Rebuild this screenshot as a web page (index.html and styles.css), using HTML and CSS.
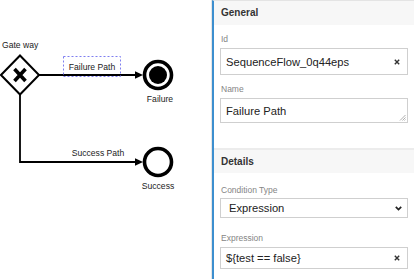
FILE: index.html
```html
<!DOCTYPE html>
<html>
<head>
<meta charset="utf-8">
<link rel="stylesheet" href="styles.css">
</head>
<body>
<div class="app">
  <div class="canvas">
    <svg class="diagram" width="212" height="279" viewBox="0 0 212 279">
      <text class="lbl" x="2" y="48">Gate way</text>
      <polygon points="20,55.5 39,75 20,94.5 1,75" fill="#fff" stroke="#000" stroke-width="2"/>
      <path d="M14.5 69 L25.5 81 M25.5 69 L14.5 81" stroke="#000" stroke-width="3.6" fill="none"/>
      <path d="M39 75 L137 75" stroke="#000" stroke-width="1.8" fill="none"/>
      <polygon points="143,75 135,71.3 135,78.7" fill="#000"/>
      <rect x="63.5" y="56.5" width="57" height="20" fill="none" stroke="#7e7ef0" stroke-width="1" stroke-dasharray="2,2"/>
      <text class="lbl" x="92" y="69.5" text-anchor="middle">Failure Path</text>
      <circle cx="158" cy="75" r="13.5" fill="#fff" stroke="#000" stroke-width="3.6"/>
      <circle cx="158" cy="75" r="9" fill="#000"/>
      <text class="lbl" x="160" y="101.5" text-anchor="middle">Failure</text>
      <path d="M20 94.5 L20 162 L137 162" stroke="#000" stroke-width="1.8" fill="none"/>
      <polygon points="143,162 135,158.3 135,165.7" fill="#000"/>
      <text class="lbl" x="98" y="155.5" text-anchor="middle">Success Path</text>
      <circle cx="158" cy="162" r="13.5" fill="#fff" stroke="#000" stroke-width="3.6"/>
      <text class="lbl" x="158" y="189" text-anchor="middle">Success</text>
    </svg>
  </div>
  <div class="panel">
    <div class="group">
      <div class="group-header">General</div>
      <div class="field">
        <div class="field-label">Id</div>
        <div class="control control-id">
          <span class="value">SequenceFlow_0q44eps</span>
          <svg class="clear" width="6" height="6" viewBox="0 0 6 6"><path d="M0.8 0.8 L5.2 5.2 M5.2 0.8 L0.8 5.2" stroke="#333" stroke-width="1.4"/></svg>
        </div>
      </div>
      <div class="field">
        <div class="field-label">Name</div>
        <div class="control control-area">
          <span class="value">Failure Path</span>
          <svg class="grip" width="7" height="7" viewBox="0 0 7 7"><path d="M6.5 1 L1 6.5 M6.5 3.5 L3.5 6.5 M6.5 5.5 L5.5 6.5" stroke="#999" stroke-width="0.8"/></svg>
        </div>
      </div>
    </div>
    <div class="group group-details">
      <div class="group-header">Details</div>
      <div class="field field-first">
        <div class="field-label">Condition Type</div>
        <div class="control control-select">
          <span class="value">Expression</span>
          <svg class="chevron" width="7" height="5" viewBox="0 0 7 5"><path d="M0.8 0.8 L3.5 3.6 L6.2 0.8" stroke="#222" stroke-width="1.7" fill="none"/></svg>
        </div>
      </div>
      <div class="field field-expr">
        <div class="field-label">Expression</div>
        <div class="control control-expr">
          <span class="value">${test == false}</span>
          <svg class="clear" width="6" height="6" viewBox="0 0 6 6"><path d="M0.8 0.8 L5.2 5.2 M5.2 0.8 L0.8 5.2" stroke="#333" stroke-width="1.4"/></svg>
        </div>
      </div>
    </div>
  </div>
</div>
</body>
</html>
```

FILE: styles.css
```css
html, body {
  margin: 0;
  padding: 0;
  background: #fff;
}

body {
  width: 414px;
  height: 279px;
  overflow: hidden;
  font-family: "Liberation Sans", Arial, sans-serif;
  color: #222;
}

.app {
  display: flex;
  height: 279px;
}

.canvas {
  width: 211px;
  flex: none;
  border-right: 1px solid #e6e6e6;
}

.diagram {
  display: block;
}

.lbl {
  font-family: "Liberation Sans", Arial, sans-serif;
  font-size: 8.6px;
  fill: #222;
}

.panel {
  flex: 1;
  border-left: 2px solid #3d8fcf;
  border-top: 1px solid #e4e4e4;
  background: #fff;
  height: 278px;
  overflow: hidden;
}

.group-header {
  height: 24px;
  line-height: 24px;
  background: #f7f7f7;
  padding-left: 7px;
  font-size: 10px;
  font-weight: bold;
  color: #333;
}

.field {
  padding: 0 6px;
}

.field-label {
  font-size: 8.5px;
  line-height: 10px;
  color: #858585;
  margin-top: 9px;
  margin-bottom: 4px;
  padding-left: 1px;
}

.control {
  display: flex;
  align-items: center;
  justify-content: space-between;
  border: 1px solid #cfcfcf;
  background: #fff;
  box-sizing: border-box;
  padding: 0 7px 0 5px;
  font-size: 11.2px;
  color: #222;
  position: relative;
}

.control-id {
  height: 27px;
}

.control-area {
  height: 25px;
}

.grip {
  position: absolute;
  right: 1px;
  bottom: 1px;
}

.group-details {
  margin-top: 25px;
  border-top: 2px solid #ececec;
}

.group-details .group-header {
  height: 23px;
  line-height: 23px;
}

.field-first .field-label {
  margin-top: 12px;
  margin-bottom: 3px;
}

.control-select {
  height: 20px;
  padding-left: 8px;
  padding-right: 5px;
}

.field-expr .field-label {
  margin-top: 15px;
}

.control-expr {
  height: 22px;
}
```
